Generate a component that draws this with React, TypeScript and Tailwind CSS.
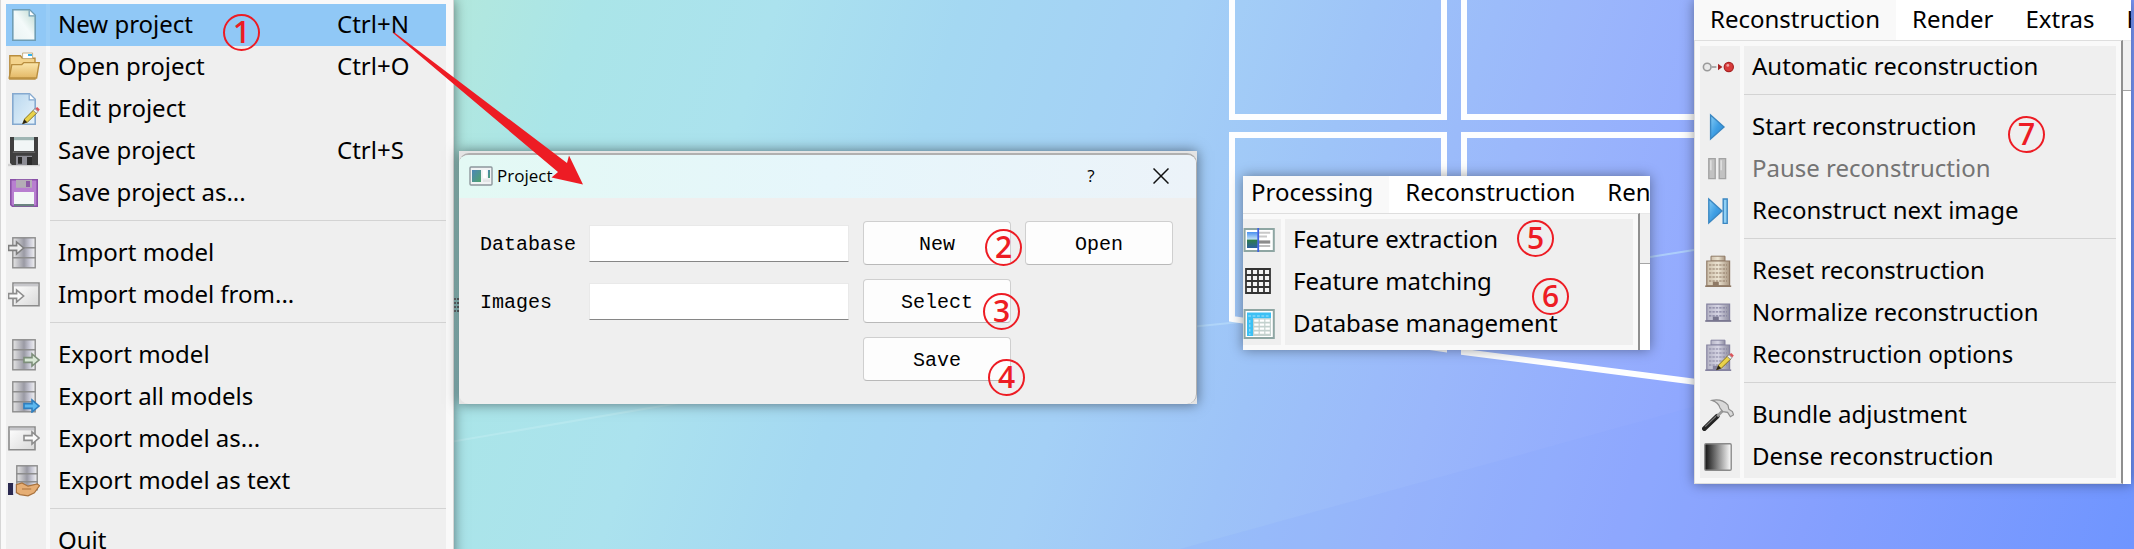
import type { ReactNode } from 'react'
import { clsx } from 'clsx'

interface MenuEntry {
  label: string
  icon?: ReactNode
  shortcut?: string
  active?: boolean
  disabled?: boolean
}

type MenuItem = MenuEntry | 'separator'

function Icon({ children }: { children: ReactNode }) {
  return (
    <svg viewBox="0 0 16 16" className="size-8 shrink-0" aria-hidden="true">
      {children}
    </svg>
  )
}

// gradients shared by all the toolbar icons
function IconDefs() {
  return (
    <svg className="absolute size-0" aria-hidden="true">
      <defs>
        <linearGradient id="paper" x1="1" y1="0" x2="0" y2="1">
          <stop offset="0" stopColor="#bcd8cf" />
          <stop offset="0.5" stopColor="#f4fafa" />
          <stop offset="1" stopColor="#e9f3f3" />
        </linearGradient>
        <linearGradient id="paperBlue" x1="0" y1="0" x2="1" y2="1">
          <stop offset="0" stopColor="#b9d7ee" />
          <stop offset="1" stopColor="#e6f3fb" />
        </linearGradient>
        <linearGradient id="folder" x1="0" y1="0" x2="0" y2="1">
          <stop offset="0" stopColor="#fbe6ab" />
          <stop offset="1" stopColor="#e3b866" />
        </linearGradient>
        <linearGradient id="steel" x1="0" y1="0" x2="1" y2="0">
          <stop offset="0" stopColor="#e6e6e6" />
          <stop offset="0.5" stopColor="#9a9aa4" />
          <stop offset="0.75" stopColor="#c9c9d6" />
          <stop offset="1" stopColor="#f2f2f2" />
        </linearGradient>
        <linearGradient id="sheet" x1="0" y1="0" x2="1" y2="1">
          <stop offset="0" stopColor="#ffffff" />
          <stop offset="1" stopColor="#d9d9d9" />
        </linearGradient>
        <linearGradient id="play" x1="0" y1="0" x2="1" y2="1">
          <stop offset="0" stopColor="#86cdf5" />
          <stop offset="0.5" stopColor="#3f9fe4" />
          <stop offset="1" stopColor="#2c86d0" />
        </linearGradient>
        <linearGradient id="stone" x1="0" y1="0" x2="1" y2="0">
          <stop offset="0" stopColor="#cdbfaa" />
          <stop offset="0.5" stopColor="#ece4d2" />
          <stop offset="1" stopColor="#a89580" />
        </linearGradient>
        <linearGradient id="slate" x1="0" y1="0" x2="1" y2="0">
          <stop offset="0" stopColor="#b4b3c4" />
          <stop offset="0.5" stopColor="#d6d5e4" />
          <stop offset="1" stopColor="#8e8da0" />
        </linearGradient>
        <linearGradient id="dense" x1="0" y1="0" x2="1" y2="0">
          <stop offset="0" stopColor="#111111" />
          <stop offset="1" stopColor="#ffffff" />
        </linearGradient>
        <linearGradient id="photo" x1="0" y1="0" x2="0" y2="1">
          <stop offset="0" stopColor="#4a90f0" />
          <stop offset="0.45" stopColor="#bfe0f5" />
          <stop offset="0.5" stopColor="#2f7d4a" />
          <stop offset="1" stopColor="#2b5f9e" />
        </linearGradient>
      </defs>
    </svg>
  )
}

function Pencil() {
  return (
    <>
      <path d="M7.5 15.2 8.3 13l4.6-4.6 1.6 1.5-4.7 4.6z" fill="#e9d24a" stroke="#8a7420" strokeWidth="0.5" />
      <path d="M7 15.6 8.2 13.2 9.6 14.6z" fill="#2a2418" />
      <path d="m12.6 8.7.9-.9 1.5 1.5-.9.9z" fill="#f2f2f2" stroke="#777" strokeWidth="0.4" />
      <path d="M13.7 7.7 14.6 7l1.3 1.2-.8 1z" fill="#d9535a" />
    </>
  )
}

function Cabinet({ x = 2, y = 0, w = 12, h = 5 }) {
  return (
    <g fill="url(#steel)" stroke="#8c8c8c" strokeWidth="0.7">
      <rect x={x + 0.4} y={y + 0.4} width={w - 0.8} height={h} />
      <rect x={x + 0.4} y={y + h + 0.4} width={w - 0.8} height={h} />
      <rect x={x + 0.4} y={y + 2 * h + 0.4} width={w - 0.8} height={h} />
    </g>
  )
}

function Arrow({ x, y, fill, stroke }: { x: number; y: number; fill: string; stroke: string }) {
  return (
    <path
      transform={`translate(${x} ${y})`}
      d="M0 2.3h4V.5l3.5 3L4 6.5V4.7H0z"
      fill={fill}
      stroke={stroke}
      strokeWidth="0.8"
    />
  )
}

function Building({ fill, line }: { fill: string; line: string }) {
  return (
    <>
      <path d="M4.500 3V.6h7V3z" fill={fill} stroke={line} strokeWidth="0.5" />
      <path d="M2.4 3h11.4v12.4H2.4z" fill={fill} stroke={line} strokeWidth="0.6" />
      <path d="M3.5 5h9M3.5 7h9M3.5 9h9M3.5 11h9M3.5 13h9" stroke={line} strokeWidth="0.6" strokeDasharray="1.2 0.5" />
      <path d="M5.4 13.4h3v2h-3z" fill={line} />
      <path d="M1.6 15.6h13" stroke={line} strokeWidth="0.8" />
    </>
  )
}

const icons = {
  newFile: (
    <Icon>
      <path d="M2.4.4h8.4l2.8 2.8v12.4H2.4z" fill="url(#paper)" stroke="#6f9db5" strokeWidth="0.8" />
      <path d="M10.6.6v2.8h2.8" fill="#fff" stroke="#6f9db5" strokeWidth="0.6" />
    </Icon>
  ),
  openFolder: (
    <Icon>
      <path d="M.9 14V2.4h5.3l1 1.2h6.3V14z" fill="#f3d38c" stroke="#b98e3f" strokeWidth="0.7" />
      <path d="M7.3 1h5v2.800h-5z" fill="#fff" stroke="#b9a06a" strokeWidth="0.4" />
      <path d="M10 1.500h2v1h-2z" fill="#2fb2f0" />
      <path d="M.6 13.500 1.900 6.800h5l1-1h7.700l-1.300 7.700z" fill="url(#folder)" stroke="#b98e3f" strokeWidth="0.7" />
    </Icon>
  ),
  editFile: (
    <Icon>
      <path d="M2.4.4h8.4l2.8 2.8v12.4H2.4z" fill="url(#paperBlue)" stroke="#85a9cf" strokeWidth="0.8" />
      <path d="M10.6.6v2.8h2.8" fill="#fff" stroke="#85a9cf" strokeWidth="0.6" />
      <Pencil />
    </Icon>
  ),
  save: (
    <Icon>
      <path d="M0 14.4h16v1.2H0z" fill="#d0d0d0" />
      <path d="M1 1h14v14H2l-1-1z" fill="#3f3f3f" />
      <path d="M3 1h10v7H3z" fill="#f1f6f6" />
      <path d="M3 1h10v1.6H3z" fill="#9fb5b3" />
      <path d="M2.4 8.6h11.2" stroke="#6d6d6d" strokeWidth="0.6" />
      <path d="M4 10.4h8V15H4z" fill="#8d8d95" />
      <path d="M5 11h2v3.4H5zM9.5 11H12v4H9.5z" fill="#2b2b2b" />
    </Icon>
  ),
  saveAs: (
    <Icon>
      <path d="M1.4 1.4h13.2v13.2H2.2l-.8-.8z" fill="#b87fd0" stroke="#8a4fa8" strokeWidth="0.8" />
      <path d="M4 1.4h8v4H4z" fill="#b4adb6" />
      <path d="M9 2h2v3H9z" fill="#8d5aa5" />
      <path d="M3 7.5h10v7H3z" fill="#f3f7f6" />
      <path d="M3 13.5h10v1.2H3z" fill="#6b8480" />
    </Icon>
  ),
  importModel: (
    <Icon>
      <Cabinet />
      <Arrow x={0.3} y={2} fill="#eeeeee" stroke="#7f7f7f" />
    </Icon>
  ),
  importFrom: (
    <Icon>
      <path d="M2.5 2h13v11.4h-13z" fill="url(#sheet)" stroke="#8b8b8b" strokeWidth="0.8" />
      <path d="M2.9 2.4h12.2v1.3H2.9z" fill="#c7c7cb" />
      <Arrow x={0.3} y={5} fill="#fafafa" stroke="#8d8d8d" />
    </Icon>
  ),
  exportModel: (
    <Icon>
      <Cabinet />
      <Arrow x={8} y={7} fill="#d9e8d6" stroke="#7d8f7a" />
    </Icon>
  ),
  exportAll: (
    <Icon>
      <Cabinet />
      <Arrow x={8} y={9} fill="#5cb8ef" stroke="#2f7fbf" />
    </Icon>
  ),
  exportAs: (
    <Icon>
      <path d="M.5 2h13v11.4H.5z" fill="url(#sheet)" stroke="#8b8b8b" strokeWidth="0.8" />
      <path d="M.9 2.4h12.2v1.3H.9z" fill="#c7c7cb" />
      <Arrow x={8} y={4} fill="#fafafa" stroke="#8d8d8d" />
    </Icon>
  ),
  exportText: (
    <Icon>
      <Cabinet x={4} w={11} h={4} />
      <path d="M0 9h2.6v6H0z" fill="#2a2950" />
      <path d="M2.6 9.4h1.6v5H2.6z" fill="#dfe3f2" />
      <path d="M4.2 9.8 7 9l3 1.6 4.6-1.1 1.2.8-2.6 3.6-3.2 1.5-4-.6-1.8-1z" fill="#e6ae74" stroke="#a8713c" strokeWidth="0.6" />
      <path d="M7 12h4.6" stroke="#a8713c" strokeWidth="0.5" />
    </Icon>
  ),
  extraction: (
    <Icon>
      <path d="M.8 2.5h14.6v11H.8z" fill="#fff" stroke="#8ea6a3" strokeWidth="1" />
      <path d="M2 4h5.4v8H2z" fill="url(#photo)" />
      <path d="M8 4.4h5.6M8 6.2h4" stroke="#c9c9c9" strokeWidth="1" />
      <path d="M8 8.2h5.6v1.6H8z" fill="#8b8b8b" />
      <path d="M8 11h5.6" stroke="#bdbdbd" strokeWidth="1" />
      <path d="M7.6 2v12" stroke="#3f62e0" strokeWidth="0.9" />
    </Icon>
  ),
  matching: (
    <Icon>
      <path
        d="M1.5 1.5h12v12h-12zM4.5 1.5v12M7.5 1.5v12M10.5 1.5v12M1.5 4.5h12M1.5 7.5h12M1.5 10.5h12"
        fill="#f4f4f4"
        stroke="#333"
        strokeWidth="0.9"
      />
    </Icon>
  ),
  database: (
    <Icon>
      <path d="M.8 1h14.6v14H.8z" fill="#fff" stroke="#8ea6a3" strokeWidth="1" />
      <path d="M2 2.2h12v3H2zM2 5.2h3V14H2z" fill="#3cc0f4" />
      <path d="M5 5.2h9V14H5z" fill="#c3d1ce" />
      <path
        d="M5.6 6.3h8M5.6 8.3h8M5.6 10.3h8M5.6 12.3h8"
        stroke="#fff"
        strokeWidth="1.2"
        strokeDasharray="2.2 0.6"
      />
      <path d="M2.6 4h11M3.4 6v7.5" stroke="#a8e4fb" strokeWidth="0.5" strokeDasharray="1.4 0.8" />
    </Icon>
  ),
  automatic: (
    <Icon>
      <circle cx="2.6" cy="8" r="1.9" fill="#e9e9e9" stroke="#9a9a9a" strokeWidth="0.8" />
      <path d="M4.8 8h2.4" stroke="#9a9a9a" strokeWidth="0.8" />
      <path d="M8 6.4 10.2 8 8 9.6z" fill="#a82222" />
      <circle cx="13.4" cy="8" r="2.3" fill="#d83a3a" stroke="#a82222" strokeWidth="0.6" />
      <circle cx="12.9" cy="7.2" r="0.7" fill="#f2a0a0" />
    </Icon>
  ),
  start: (
    <Icon>
      <path d="M4.3 2 11 8l-6.7 6z" fill="url(#play)" stroke="#3a87c2" strokeWidth="0.7" />
    </Icon>
  ),
  pause: (
    <Icon>
      <path d="M3.4 2.8h3.2v10H3.4zM8.6 2.8h3.2v10H8.6z" fill="#c2c2c2" stroke="#a3a3a3" strokeWidth="0.7" />
      <path d="M4.4 3.6v5M9.6 3.6v5" stroke="#dedede" strokeWidth="0.8" />
    </Icon>
  ),
  next: (
    <Icon>
      <path d="M3.4 2 10 8l-6.6 6z" fill="url(#play)" stroke="#3a87c2" strokeWidth="0.7" />
      <path d="M10.6 2h2v12.2h-2z" fill="#8fd0f5" stroke="#3a87c2" strokeWidth="0.7" />
    </Icon>
  ),
  reset: (
    <Icon>
      <Building fill="url(#stone)" line="#8f7a66" />
    </Icon>
  ),
  normalize: (
    <Icon>
      <path d="M2.4 3.6h11.4v8.2H2.4z" fill="url(#slate)" stroke="#8583a0" strokeWidth="0.6" />
      <path d="M3.5 5.4h9M3.5 7.4h9M3.5 9.4h9" stroke="#8583a0" strokeWidth="0.6" strokeDasharray="1.2 0.5" />
      <path d="M5.4 9.8h3v2h-3z" fill="#77758e" />
      <path d="M1.6 12h13" stroke="#77758e" strokeWidth="0.8" />
    </Icon>
  ),
  options: (
    <Icon>
      <Building fill="url(#slate)" line="#8583a0" />
      <Pencil />
    </Icon>
  ),
  bundle: (
    <Icon>
      <path d="M1.2 14.8 7.6 8.6" stroke="#222" strokeWidth="2.4" strokeLinecap="round" />
      <path d="M1.6 13.8 7 8.6" stroke="#777" strokeWidth="0.6" />
      <path d="m7.6 8.6 3-3" stroke="#9b9b9b" strokeWidth="1.4" />
      <path
        d="M5 .7c3-.6 6 .2 8 2.4l.4 2 1.8 1.2.6 1.6-1.6 1-1.4-2.2-2.4-.4-1.4-1.8C8.6 2.6 7 1.4 5 .7z"
        fill="#d9d9d9"
        stroke="#8e8e8e"
        strokeWidth="0.6"
      />
    </Icon>
  ),
  dense: (
    <Icon>
      <rect x="1.4" y="1.4" width="13.2" height="13.2" rx="0.6" fill="url(#dense)" stroke="#8a8a8a" strokeWidth="0.7" />
    </Icon>
  ),
}

const fileMenu: MenuItem[] = [
  { label: 'New project', icon: icons.newFile, shortcut: 'Ctrl+N', active: true },
  { label: 'Open project', icon: icons.openFolder, shortcut: 'Ctrl+O' },
  { label: 'Edit project', icon: icons.editFile },
  { label: 'Save project', icon: icons.save, shortcut: 'Ctrl+S' },
  { label: 'Save project as...', icon: icons.saveAs },
  'separator',
  { label: 'Import model', icon: icons.importModel },
  { label: 'Import model from...', icon: icons.importFrom },
  'separator',
  { label: 'Export model', icon: icons.exportModel },
  { label: 'Export all models', icon: icons.exportAll },
  { label: 'Export model as...', icon: icons.exportAs },
  { label: 'Export model as text', icon: icons.exportText },
  'separator',
  { label: 'Quit' },
]

const processingMenu: MenuItem[] = [
  { label: 'Feature extraction', icon: icons.extraction },
  { label: 'Feature matching', icon: icons.matching },
  { label: 'Database management', icon: icons.database },
]

const reconstructionMenu: MenuItem[] = [
  { label: 'Automatic reconstruction', icon: icons.automatic },
  'separator',
  { label: 'Start reconstruction', icon: icons.start },
  { label: 'Pause reconstruction', icon: icons.pause, disabled: true },
  { label: 'Reconstruct next image', icon: icons.next },
  'separator',
  { label: 'Reset reconstruction', icon: icons.reset },
  { label: 'Normalize reconstruction', icon: icons.normalize },
  { label: 'Reconstruction options', icon: icons.options },
  'separator',
  { label: 'Bundle adjustment', icon: icons.bundle },
  { label: 'Dense reconstruction', icon: icons.dense },
]

function Menu({ items }: { items: MenuItem[] }) {
  return (
    <div role="menu" className="flex flex-col">
      {items.map((item, i) => {
        if (item === 'separator') {
          return (
            <div key={i} role="separator" className="flex h-[18px] gap-1">
              <div className="w-10 bg-[#efefef]" />
              <div className="flex-1 bg-[#efefef] pt-1.5">
                <div className="h-px bg-[#d3d3d3]" />
              </div>
            </div>
          )
        }
        const cell = item.active ? 'bg-[#90c8f6]' : 'bg-[#efefef]'
        return (
          <button
            key={i}
            type="button"
            role="menuitem"
            disabled={item.disabled}
            className={clsx(
              'flex h-[42px] gap-1 text-left whitespace-nowrap',
              item.active && 'bg-[#99cdf7]',
              item.disabled ? 'text-[#747474]' : 'text-black',
            )}
          >
            <span className={clsx('flex h-full w-10 items-center pl-0.5', cell)}>{item.icon}</span>
            <span className={clsx('flex h-full flex-1 items-center pb-0.5 pl-2', cell)}>
              <span className="flex-1">{item.label}</span>
              {item.shortcut && <span className="w-[109px]">{item.shortcut}</span>}
            </span>
          </button>
        )
      })}
    </div>
  )
}

// cropped piece of the main window: menu bar with one menu pulled down
function MenuWindow({ tabs, items, cropped }: { tabs: string[]; items: MenuItem[]; cropped?: boolean }) {
  return (
    <div className={clsx('flex flex-col', cropped && '-ml-2')}>
      <div role="menubar" className={clsx('flex bg-white', cropped ? 'h-[37px]' : 'h-10')}>
        {tabs.map((tab, i) => (
          <button
            key={tab}
            type="button"
            role="menuitem"
            className={clsx(
              'h-full shrink-0 px-4 whitespace-nowrap',
              i === 0 && 'bg-[#f9f9f9]',
              cropped ? 'pb-1.5' : 'pb-[3px]',
            )}
          >
            {tab}
          </button>
        ))}
      </div>
      <div className="flex">
        <div
          className={clsx(
            'flex-1 border border-r-2 border-[#dedede] border-r-[#8f8f8f] bg-[#f9f9f9] p-[5px]',
            cropped && 'border-b-0',
          )}
        >
          <Menu items={items} />
        </div>
        <div className={clsx('flex flex-col', cropped ? 'w-2.5' : 'w-2')}>
          <div className="h-[51px] border-y border-t-[#e8e8e8] border-b-[#a5a5a5] bg-[#f0f0f0]" />
          <div className="flex-1 bg-white" />
        </div>
      </div>
    </div>
  )
}

function Wallpaper() {
  return (
    <svg
      viewBox="0 0 2134 549"
      preserveAspectRatio="xMinYMin slice"
      className="absolute inset-0 size-full"
      aria-hidden="true"
    >
      <defs>
        <linearGradient id="sky" gradientUnits="userSpaceOnUse" x1="440" y1="0" x2="2134" y2="549">
          <stop offset="0" stopColor="#b3e8dc" />
          <stop offset="0.08" stopColor="#aae5e8" />
          <stop offset="0.18" stopColor="#abe2ee" />
          <stop offset="0.28" stopColor="#a4d8f2" />
          <stop offset="0.4" stopColor="#a4d0f6" />
          <stop offset="0.5" stopColor="#9dc3f8" />
          <stop offset="0.6" stopColor="#9ab7fb" />
          <stop offset="0.72" stopColor="#91a9fe" />
          <stop offset="0.82" stopColor="#86a0fe" />
          <stop offset="1" stopColor="#6f95ff" />
        </linearGradient>
      </defs>
      <rect width="2134" height="549" fill="url(#sky)" />
      <path d="M1180 549 1700 405V549z" fill="#7fa4ff" opacity="0.15" />
      <path d="M450 442 720 396" stroke="#c8f0f4" strokeWidth="2" opacity="0.4" />
      <path d="M1190 327 1240 322M1650 257l44-7" stroke="#b8dcfb" strokeWidth="2" opacity="0.7" />
      <g fill="#ffffff" fillOpacity="0.02" stroke="#fdfeff" strokeWidth="6">
        <path d="M1232-6H1444V117H1232z" />
        <path d="M1464-6H1720V117H1464z" />
        <path d="M1232 135H1444V349L1232 319z" />
        <path d="M1464 135H1720V385L1464 352z" />
      </g>
    </svg>
  )
}

function ProjectDialog() {
  const button = 'h-11 rounded-[4px] border border-[#cfcfcf] border-b-[#b9b9b9] bg-[#fdfdfd] pt-1'
  const input = 'h-[37px] w-full border border-[#e9e9e9] border-b-[#868686] bg-white px-2 outline-none'
  return (
    <section aria-label="Project" className="bg-[#e4e4e4] pt-0.5 shadow-[0_0_12px_rgba(0,0,0,0.5)]">
      <div className="overflow-hidden rounded-[10px] border-t-2 border-r border-[#b0b0b0] bg-[#efefef]">
        <header className="flex h-[43px] items-center bg-linear-to-r from-[#e3f9f4] via-[#e6f6fb] to-[#ecf3f9] pb-0.5 pl-2.5 font-['Open_Sans',sans-serif] text-[17px] text-black">
          <svg viewBox="0 0 24 20" className="h-5 w-6" aria-hidden="true">
            <defs>
              <linearGradient id="app" x1="0" y1="0" x2="1" y2="1">
                <stop offset="0" stopColor="#4c86b8" />
                <stop offset="1" stopColor="#4fa36c" />
              </linearGradient>
            </defs>
            <rect x="1" y="1" width="22" height="18" rx="1" fill="#f1f3f4" stroke="#8d979c" strokeWidth="1.4" />
            <path d="M3 4h9v12H3z" fill="url(#app)" />
            <path d="M14 4h3.5v8H14z" fill="#fff" />
            <path d="M19 4h2v8h-2z" fill="url(#app)" />
            <path d="M14 13.5h7V16h-7z" fill="#e2e4e6" />
          </svg>
          <h1 className="ml-1 flex-1">Project</h1>
          <button type="button" aria-label="Help" className="w-[70px]">?</button>
          <button type="button" aria-label="Close" className="flex w-[70px] justify-center">
            <svg viewBox="0 0 16 16" className="size-4" aria-hidden="true">
              <path d="m.5.5 15 15M15.5.5l-15 15" stroke="#111" strokeWidth="1.5" />
            </svg>
          </button>
        </header>
        <form className="grid grid-cols-[95px_1fr_148px_148px] items-center gap-3.5 py-[23px] pr-[23px] pl-[21px] font-['Liberation_Mono',monospace] text-[20px] text-black">
          <label htmlFor="database" className="pt-1">Database</label>
          <input id="database" type="text" className={input} />
          <button type="button" className={button}>New</button>
          <button type="button" className={button}>Open</button>
          <label htmlFor="images" className="pt-1">Images</label>
          <input id="images" type="text" className={input} />
          <button type="button" className={button}>Select</button>
          <button type="button" className={clsx(button, 'col-start-3')}>Save</button>
        </form>
      </div>
    </section>
  )
}

const steps = [
  { n: 1, place: 'left-[223px] top-[14px]' },
  { n: 2, place: 'left-[985px] top-[229px]' },
  { n: 3, place: 'left-[983px] top-[293px]' },
  { n: 4, place: 'left-[988px] top-[359px]' },
  { n: 5, place: 'left-[1517px] top-[220px]' },
  { n: 6, place: 'left-[1532px] top-[278px]' },
  { n: 7, place: 'left-[2008px] top-[116px]' },
]

export default function App() {
  return (
    <main className="relative h-screen overflow-hidden font-['Noto_Sans',sans-serif] text-[24px] leading-8 text-black">
      <IconDefs />
      <Wallpaper />

      <div className="absolute top-0 left-0 w-[454px] border-x border-[#d6d6d6] bg-[#f9f9f9] px-[5px] py-1 pr-[7px] shadow-[0_0_12px_rgba(0,0,0,0.5)]">
        <Menu items={fileMenu} />
      </div>

      <svg viewBox="0 0 6 18" className="absolute top-[297px] left-[454px] h-[18px] w-1.5" aria-hidden="true">
        <path d="M0 2h5M0 6h5M0 10h5M0 14h5" stroke="#5f6468" strokeWidth="2" strokeDasharray="2 1" />
      </svg>

      <div className="absolute top-[151px] left-[459px] w-[738px]">
        <ProjectDialog />
      </div>

      <div className="absolute top-[176px] left-[1243px] w-[407px] overflow-hidden shadow-[0_0_12px_rgba(0,0,0,0.4)]">
        <MenuWindow tabs={['Processing', 'Reconstruction', 'Render']} items={processingMenu} cropped />
      </div>

      <div className="absolute top-0 left-[1694px] w-[437px] overflow-hidden shadow-[0_0_12px_rgba(0,0,0,0.4)]">
        <MenuWindow tabs={['Reconstruction', 'Render', 'Extras', 'Help']} items={reconstructionMenu} />
      </div>

      <svg viewBox="0 0 200 160" className="absolute top-[30px] left-[390px] h-40 w-[200px]" aria-hidden="true">
        <path d="M3 3 4.500 2.500 177 133 179 125.500 193 154.500 161.500 147.500 168 142z" fill="#ed1c24" />
      </svg>

      {steps.map(({ n, place }) => (
        <span
          key={n}
          className={clsx(
            "absolute flex size-[37px] items-center justify-center rounded-full border-2 border-[#ed1c24] pb-0.5 font-['Open_Sans',sans-serif] text-[30px] font-semibold text-[#ed1c24]",
            place,
          )}
        >
          {n}
        </span>
      ))}
    </main>
  )
}
